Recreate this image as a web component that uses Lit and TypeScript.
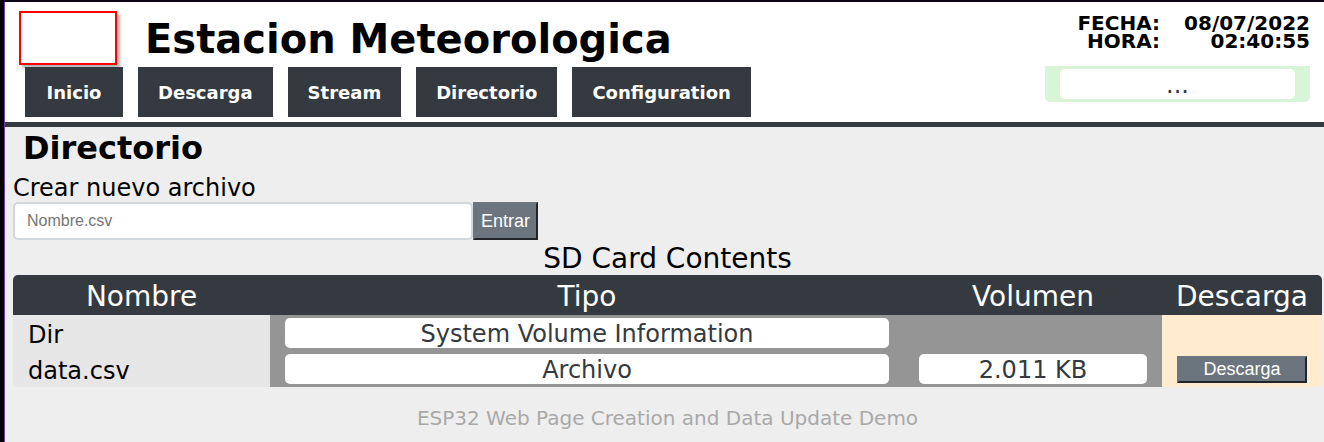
import { LitElement, html, css, nothing } from "lit";
import { customElement, state } from "lit/decorators.js";

interface Entry {
  name: string;
  kind: string;
  size?: string;
}

@customElement("app-root")
export class AppRoot extends LitElement {
  static styles = css`
    :host {
      display: flex;
      flex-direction: column;
      box-sizing: border-box;
      min-height: 100vh;
      border-top: 2px solid #0d0618;
      border-left: 4px solid #050208;
      background: #eeeeee;
      color: #000;
      font-family: Verdana, "DejaVu Sans", sans-serif;
      font-size: 24px;
    }
    * {
      box-sizing: border-box;
    }
    .page {
      flex: 1;
      border-left: 1px solid #6a3fae;
    }
    .header {
      display: flex;
      justify-content: space-between;
      padding: 9px 14px 5px;
      background: #fff;
      border-bottom: 5px solid #343a40;
    }
    .brand {
      display: flex;
      align-items: center;
      gap: 28px;
    }
    .logo {
      width: 98px;
      height: 54px;
      border: 2px solid #f00;
      box-shadow: 3px 3px 3px rgba(0, 0, 0, 0.3);
    }
    .title {
      margin: 0;
      padding-top: 2px;
      font-size: 40px;
      line-height: 52px;
      font-weight: bold;
    }
    .nav {
      display: flex;
      gap: 15px;
      margin: 2px 0 0 6px;
    }
    .nav a {
      min-width: 98px;
      padding: 2px 20px 0;
      background: #343a40;
      color: #fff;
      font-size: 18px;
      line-height: 48px;
      font-weight: bold;
      text-align: center;
      text-decoration: none;
    }
    .side {
      display: flex;
      flex-direction: column;
      align-items: flex-end;
      gap: 16px;
      padding-top: 3px;
    }
    .clock {
      display: grid;
      grid-template-columns: auto 142px;
      column-gap: 8px;
      margin: 0;
      font-size: 20px;
      line-height: 18px;
      font-weight: bold;
      text-align: right;
    }
    .clock dd {
      margin: 0;
    }
    .status {
      width: 265px;
      padding: 3px 15px;
      border-radius: 0 0 5px 5px;
      background: #d8f5d8;
    }
    .pill {
      display: block;
      padding-top: 2px;
      border-radius: 5px;
      background: #fff;
      color: #343a40;
      line-height: 28px;
      text-align: center;
    }
    .content {
      padding: 0 2px 0 8px;
    }
    .heading {
      margin: 0 0 0 10px;
      font-size: 32px;
      line-height: 42px;
    }
    .create label {
      display: block;
      padding-top: 5px;
      line-height: 28px;
    }
    .field {
      display: flex;
      height: 38px;
    }
    .field input {
      width: 460px;
      padding: 0 12px;
      border: 2px solid #d3d8dd;
      border-radius: 5px;
      background: #fff;
      font: 16px "Liberation Sans", Arial, sans-serif;
    }
    .field input::placeholder {
      color: #757575;
    }
    button {
      padding: 0 6px;
      border: 2px solid;
      border-color: #6c757d #212529 #212529 #6c757d;
      border-radius: 0;
      background: #6c757d;
      color: #fff;
      font: 18px "Liberation Sans", Arial, sans-serif;
    }
    .files {
      width: 100%;
      border-spacing: 0;
      table-layout: fixed;
    }
    .files caption {
      padding-top: 3px;
      font-size: 28px;
      line-height: 32px;
    }
    .files th {
      height: 40px;
      padding: 4px 0 0;
      background: #343a40;
      color: #fff;
      font-size: 28px;
      line-height: 36px;
      font-weight: normal;
    }
    .files th:first-child {
      border-top-left-radius: 5px;
    }
    .files th:last-child {
      border-top-right-radius: 5px;
    }
    .files td {
      height: 36px;
      padding: 3px 15px;
      background: #959595;
      line-height: 30px;
    }
    .files td:first-child {
      padding: 5px 15px 1px;
      background: #e6e6e6;
    }
    .files td:last-child {
      padding: 5px 15px 4px;
      background: #ffebcd;
    }
    .files tr:last-child td:first-child {
      border-bottom-left-radius: 5px;
    }
    .files tr:last-child td:last-child {
      border-bottom-right-radius: 5px;
    }
    .name-col {
      width: 257px;
    }
    .size-col {
      width: 258px;
    }
    .action-col {
      width: 160px;
    }
    .files button {
      display: block;
      width: 100%;
      height: 27px;
    }
    .footer {
      padding: 18px 0;
      color: #a9a9a9;
      font-size: 20px;
      line-height: 26px;
      text-align: center;
    }
  `;

  @state() private links = ["Inicio", "Descarga", "Stream", "Directorio", "Configuration"];

  @state() private entries: Entry[] = [
    { name: "Dir", kind: "System Volume Information" },
    { name: "data.csv", kind: "Archivo", size: "2.011 KB" },
  ];

  render() {
    return html`
      <div class="page">
        <header class="header">
          <div>
            <div class="brand">
              <div class="logo"></div>
              <h1 class="title">Estacion Meteorologica</h1>
            </div>
            <nav class="nav">${this.links.map((l) => html`<a href="#">${l}</a>`)}</nav>
          </div>
          <div class="side">
            <dl class="clock">
              <dt>FECHA:</dt>
              <dd>08/07/2022</dd>
              <dt>HORA:</dt>
              <dd>02:40:55</dd>
            </dl>
            <div class="status"><span class="pill">...</span></div>
          </div>
        </header>
        <main class="content">
          <h2 class="heading">Directorio</h2>
          <form class="create" @submit=${(e: Event) => e.preventDefault()}>
            <label for="file">Crear nuevo archivo</label>
            <div class="field">
              <input id="file" type="text" placeholder="Nombre.csv" />
              <button type="submit">Entrar</button>
            </div>
          </form>
          <table class="files">
            <caption>SD Card Contents</caption>
            <colgroup>
              <col class="name-col" />
              <col />
              <col class="size-col" />
              <col class="action-col" />
            </colgroup>
            <thead>
              <tr>
                <th scope="col">Nombre</th>
                <th scope="col">Tipo</th>
                <th scope="col">Volumen</th>
                <th scope="col">Descarga</th>
              </tr>
            </thead>
            <tbody>
              ${this.entries.map(
                (e) => html`<tr>
                  <td>${e.name}</td>
                  <td><span class="pill">${e.kind}</span></td>
                  <td>${e.size ? html`<span class="pill">${e.size}</span>` : nothing}</td>
                  <td>${e.size ? html`<button type="button">Descarga</button>` : nothing}</td>
                </tr>`
              )}
            </tbody>
          </table>
          <footer class="footer">ESP32 Web Page Creation and Data Update Demo</footer>
        </main>
      </div>
    `;
  }
}
